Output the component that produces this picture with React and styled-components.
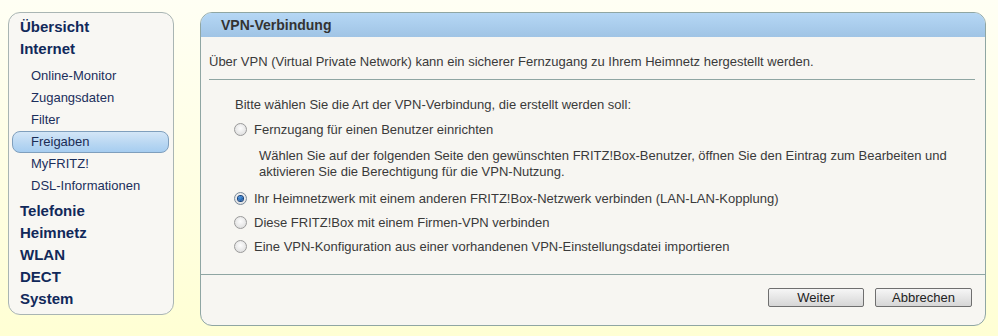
import React from "react";
import styled, { createGlobalStyle, css } from "styled-components";

const GlobalStyle = createGlobalStyle`
  html, body {
    margin: 0;
    padding: 0;
  }
  body {
    width: 998px;
    height: 336px;
    overflow: hidden;
    background: linear-gradient(#fffff4, #ffffd4);
    font-family: "Liberation Sans", Arial, sans-serif;
    color: #3a3a3a;
  }
`;

const Page = styled.div`
  display: flex;
  align-items: flex-start;
  gap: 26px;
  padding: 12px 0 0 8px;
`;

const Nav = styled.nav`
  width: 164px;
  border: 1px solid #a9b5b3;
  border-radius: 12px;
  background: #f8f7f3;
  padding: 3px 0 4px;
`;

const NavItem = styled.div`
  height: 22px;
  line-height: 22px;
  padding-left: 11px;
  font-size: 15px;
  font-weight: bold;
  color: #11295a;
`;

const SubList = styled.div`
  margin: 5px 0 3px;
`;

const SubItem = styled.div`
  height: 22px;
  line-height: 22px;
  margin: 0 4px 0 3px;
  padding-left: 19px;
  font-size: 13px;
  color: #1b2f5c;
  border-radius: 8px;
  box-sizing: border-box;
  ${(p) =>
    p.active &&
    css`
      padding-left: 18px;
      line-height: 20px;
      border: 1px solid #7f9fbd;
      background: linear-gradient(#d3e6f7, #b7d6f2 60%, #a6cdf0);
      color: #1a2c55;
    `}
`;

const Panel = styled.section`
  width: 786px;
  height: 314px;
  box-sizing: border-box;
  border: 1px solid #8fa6a3;
  border-radius: 12px;
  background: #f7f6f2;
  display: flex;
  flex-direction: column;
  overflow: hidden;
`;

const PanelHeader = styled.h1`
  margin: 0;
  height: 24px;
  line-height: 24px;
  padding-left: 20px;
  font-size: 14px;
  font-weight: bold;
  color: #333;
  background: linear-gradient(#b5d7f5, #a0c4e5);
`;

const PanelBody = styled.div`
  flex: 1;
  padding: 17px 10px 0 8px;
  font-size: 13px;
`;

const Intro = styled.p`
  margin: 0;
  line-height: 16px;
`;

const Rule = styled.hr`
  margin: 9px 0 0;
  border: 0;
  border-top: 1px solid #8fa6a3;
`;

const Options = styled.div`
  padding: 13px 0 0 26px;
`;

const Prompt = styled.div`
  line-height: 24px;
`;

const OptionRow = styled.label`
  display: flex;
  align-items: center;
  gap: 7px;
  height: 24px;
  margin-left: -1px;
`;

const Radio = styled.span`
  width: 11px;
  height: 11px;
  border-radius: 50%;
  border: 1px solid #9a9a9a;
  background: radial-gradient(circle at 50% 40%, #fdfdfd, #d8d8d8);
  display: flex;
  align-items: center;
  justify-content: center;
  flex-shrink: 0;
  ${(p) =>
    p.checked &&
    css`
      border-color: #7a8a9a;
      &::after {
        content: "";
        width: 5px;
        height: 5px;
        border-radius: 50%;
        background: radial-gradient(circle at 40% 35%, #4a9ae8, #0b3f86);
        box-shadow: 0 0 0 1px #14407a;
      }
    `}
`;

const Description = styled.p`
  margin: 7px 0 6px 24px;
  line-height: 16px;
`;

const Footer = styled.div`
  border-top: 1px solid #8fa6a3;
  display: flex;
  justify-content: flex-end;
  gap: 11px;
  padding: 13px 13px 18px 0;
`;

const Button = styled.button`
  height: 19px;
  width: ${(p) => p.w}px;
  padding: 0;
  font-family: "Liberation Sans", Arial, sans-serif;
  font-size: 13px;
  color: #222;
  border: 1px solid #6f6f6f;
  border-radius: 2px;
  background: linear-gradient(#f6f6f6, #e6e6e6 50%, #d6d6d6);
`;

const subItems = [
  "Online-Monitor",
  "Zugangsdaten",
  "Filter",
  "Freigaben",
  "MyFRITZ!",
  "DSL-Informationen",
];

const options = [
  { label: "Fernzugang für einen Benutzer einrichten", checked: false },
  {
    label:
      "Ihr Heimnetzwerk mit einem anderen FRITZ!Box-Netzwerk verbinden (LAN-LAN-Kopplung)",
    checked: true,
  },
  { label: "Diese FRITZ!Box mit einem Firmen-VPN verbinden", checked: false },
  {
    label:
      "Eine VPN-Konfiguration aus einer vorhandenen VPN-Einstellungsdatei importieren",
    checked: false,
  },
];

function Option({ label, checked }) {
  return (
    <OptionRow>
      <Radio checked={checked} />
      {label}
    </OptionRow>
  );
}

export default function App() {
  return (
    <>
      <GlobalStyle />
      <Page>
        <Nav>
          <NavItem>Übersicht</NavItem>
          <NavItem>Internet</NavItem>
          <SubList>
            {subItems.map((s) => (
              <SubItem key={s} active={s === "Freigaben"}>
                {s}
              </SubItem>
            ))}
          </SubList>
          <NavItem>Telefonie</NavItem>
          <NavItem>Heimnetz</NavItem>
          <NavItem>WLAN</NavItem>
          <NavItem>DECT</NavItem>
          <NavItem>System</NavItem>
        </Nav>
        <Panel>
          <PanelHeader>VPN-Verbindung</PanelHeader>
          <PanelBody>
            <Intro>
              Über VPN (Virtual Private Network) kann ein sicherer Fernzugang zu
              Ihrem Heimnetz hergestellt werden.
            </Intro>
            <Rule />
            <Options>
              <Prompt>
                Bitte wählen Sie die Art der VPN-Verbindung, die erstellt werden
                soll:
              </Prompt>
              <Option {...options[0]} />
              <Description>
                Wählen Sie auf der folgenden Seite den gewünschten FRITZ!Box-Benutzer,
                öffnen Sie den Eintrag zum Bearbeiten und
                <br />
                aktivieren Sie die Berechtigung für die VPN-Nutzung.
              </Description>
              {options.slice(1).map((o) => (
                <Option key={o.label} {...o} />
              ))}
            </Options>
          </PanelBody>
          <Footer>
            <Button w={96}>Weiter</Button>
            <Button w={97}>Abbrechen</Button>
          </Footer>
        </Panel>
      </Page>
    </>
  );
}
